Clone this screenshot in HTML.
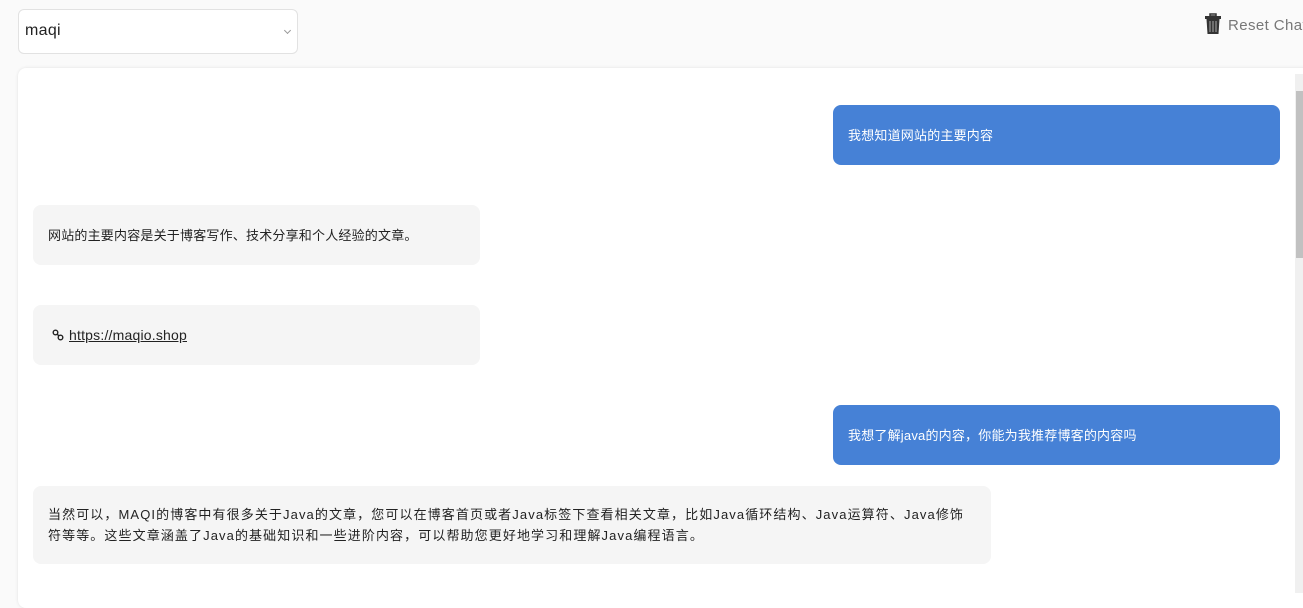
<!DOCTYPE html>
<html><head><meta charset="utf-8"><style>
body{margin:0;width:1303px;height:593px;overflow:hidden;background:#fafafa;font-family:"Liberation Sans","Noto Sans CJK SC",sans-serif;position:relative}
.sel{position:absolute;left:18px;top:9px;width:280px;height:45px;border:1px solid #e2e2e2;border-radius:6px;background:#fff;box-sizing:border-box}
.sel span{position:absolute;left:6px;top:12px;font-size:16px;color:#222;letter-spacing:.3px}
.sel i{position:absolute;right:7px;top:18px;width:4px;height:4px;border-right:1px solid #999;border-bottom:1px solid #999;transform:rotate(45deg)}
.reset{position:absolute;left:1204px;top:13px;font-size:15px;color:#777;white-space:nowrap;letter-spacing:.4px}
.card{position:absolute;left:18px;top:68px;width:1300px;height:540px;background:#fff;border-radius:8px;box-shadow:0 0 3px rgba(0,0,0,.1)}
.b{position:absolute;font-size:13px;box-sizing:border-box;border-radius:8px;padding:0 15px;display:flex;align-items:center;line-height:21px;letter-spacing:.2px}
.u{background:#4681d6;color:#fff;left:833px;width:447px;height:60px}
.a{background:#f5f5f5;color:#222;left:33px;width:447px;height:60px}
.sb{position:absolute;left:1295px;top:74px;width:8px;height:519px;background:#f0f0f0}
.th{position:absolute;left:1296px;top:91px;width:7px;height:167px;background:#c1c1c1}
</style></head><body>
<div class="sel"><span>maqi</span><i></i></div>
<div class="reset"><svg width="18" height="22" viewBox="0 0 18 22" style="vertical-align:-5px;margin-right:6px"><rect x="6" y="1" width="6" height="2" fill="none" stroke="#333" stroke-width="1.5"/><rect x="1" y="3" width="16" height="3" fill="#333"/><path d="M2.5 6h13l-1 15h-11z" fill="#333"/><path d="M6 8v11M9 8v11M12 8v11" stroke="#aaa" stroke-width="1"/></svg>Reset Chat</div>
<div class="card"></div>
<div class="b u" style="top:105px">我想知道网站的主要内容</div>
<div class="b a" style="top:205px">网站的主要内容是关于博客写作、技术分享和个人经验的文章。</div>
<div class="b a" style="top:305px;font-size:14px;padding-left:19px"><svg width="12" height="12" viewBox="0 0 12 12" style="margin-right:5px"><circle cx="3.5" cy="3.5" r="2.3" fill="none" stroke="#222" stroke-width="1.4"/><circle cx="8.5" cy="8.5" r="2.3" fill="none" stroke="#222" stroke-width="1.4"/><path d="M5 5l2 2" stroke="#222" stroke-width="1.4"/></svg><u>https://maqio.shop</u></div>
<div class="b u" style="top:405px">我想了解java的内容，你能为我推荐博客的内容吗</div>
<div class="b a" style="top:486px;width:958px;height:78px;padding-right:10px"><div style="width:935px;white-space:nowrap;letter-spacing:1.1px">当然可以，MAQI的博客中有很多关于Java的文章，您可以在博客首页或者Java标签下查看相关文章，比如Java循环结构、Java运算符、Java修饰<br>符等等。这些文章涵盖了Java的基础知识和一些进阶内容，可以帮助您更好地学习和理解Java编程语言。</div></div>
<div class="sb"></div><div class="th"></div>
</body></html>
